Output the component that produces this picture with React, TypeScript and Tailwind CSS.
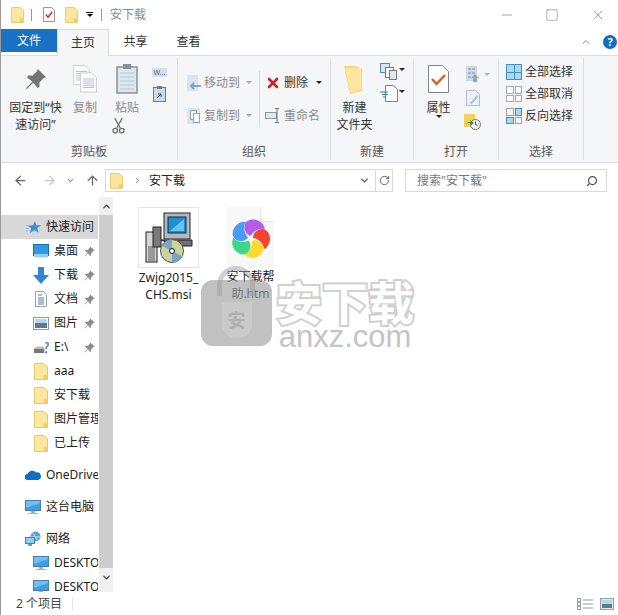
import { ReactNode } from "react";
import { ArrowLeft, ArrowRight, ArrowUp, ChevronDown, ChevronRight, ChevronUp, Minus, RotateCw, Search, Square, X } from "lucide-react";

const FONT = "font-['Noto_Sans','Noto_Sans_CJK_SC',sans-serif]";

function Folder({ className = "w-[14px] h-[17px]" }: { className?: string }) {
  return (
    <svg viewBox="0 0 14 17" className={className}>
      <path d="M.5.5h9l4 3v13H.5z" fill="#fde79f" stroke="#e8c868" />
      <path d="M9.5 16.5V12h4v4.500z" fill="#f3cf6c" />
    </svg>
  );
}

function Pin({ className = "w-[11px] h-[11px]", color = "#8c8c8c" }: { className?: string; color?: string }) {
  return (
    <svg viewBox="0 0 24 24" className={className}>
      <path d="M14 1l9 9-2.500 1-5 5 .5 4-2 2-5-6-7 7-1-1 7-7-6-5 2-2 4 .5 5-5z" fill={color} />
    </svg>
  );
}

function Caret({ color = "#222" }: { color?: string }) {
  return <span className="inline-block border-x-[3px] border-t-[3px] border-x-transparent" style={{ borderTopColor: color }} />;
}

function DocLines({ className = "" }: { className?: string }) {
  return (
    <svg viewBox="0 0 24 28" className={className}>
      <path d="M.5.5h16l7 7v20H.5z" fill="#fff" stroke="#b4b8bd" />
      <path d="M4 9h16M4 12h16M4 15h16M4 18h16M4 21h16" stroke="#8fa7c4" />
    </svg>
  );
}

function Monitor() {
  return (
    <svg viewBox="0 0 16 15" className="w-[16px] h-[15px]">
      <rect x=".5" y=".5" width="15" height="10" fill="#6cc0f5" stroke="#4a7fa8" />
      <path d="M1 8l14-5v7H1z" fill="#3fa0e8" />
      <path d="M6 11h4v2H6zM3 13h10v1H3z" fill="#9fb3c4" />
    </svg>
  );
}

function NavRow({ icon, label, pinned, top, active }: { icon: ReactNode; label: string; pinned?: boolean; top?: boolean; active?: boolean }) {
  return (
    <div className={`h-[24px] flex items-center shrink-0 whitespace-nowrap overflow-hidden relative ${top ? "pl-[24px]" : "pl-[32px]"} ${active ? "bg-[#d9d9d9]" : ""}`}>
      <span className="w-[16px] h-[16px] flex items-center justify-center shrink-0">{icon}</span>
      <span className="ml-[5px] text-[12px] text-[#222]">{label}</span>
      {pinned && (
        <span className="absolute left-[83px] top-[7px]">
          <Pin />
        </span>
      )}
    </div>
  );
}

function Sidebar() {
  return (
    <div className="w-[112px] flex shrink-0 h-[395px] overflow-hidden">
      <div className="w-[97px] pt-[18px] flex flex-col shrink-0 overflow-hidden">
        <NavRow
          top
          active
          label="快速访问"
          icon={
            <svg viewBox="0 0 16 16" className="w-[15px] h-[15px]">
              <path d="M9.500 1l1.500 4.500 5 .2-4 3 1.500 5L9 11l-5 3 1.600-5L2 6l5.500-.3z" fill="#3d8fd6" />
              <path d="M0 6h4M0 9h3M0 12h2" stroke="#8cc0ea" />
            </svg>
          }
        />
        <NavRow
          pinned
          label="桌面"
          icon={
            <svg viewBox="0 0 16 14" className="w-[16px] h-[14px]">
              <rect x=".5" y=".5" width="15" height="11" fill="#2f9ae8" stroke="#1b6fb0" />
              <path d="M1 10h14v3.500H1z" fill="#9fcdee" />
            </svg>
          }
        />
        <NavRow
          pinned
          label="下载"
          icon={
            <svg viewBox="0 0 16 17" className="w-[16px] h-[17px]">
              <path d="M5 0h6v8h5l-8 9-8-9h5z" fill="#2e86d8" />
            </svg>
          }
        />
        <NavRow
          pinned
          label="文档"
          icon={
            <svg viewBox="0 0 12 16" className="w-[12px] h-[16px]">
              <path d="M.5.500h8l3 3v12H.5z" fill="#fff" stroke="#9aa3ac" />
              <path d="M3 4h4M3 7h6M3 9h6M3 11h6M3 13h6" stroke="#4f7f9f" />
            </svg>
          }
        />
        <NavRow
          pinned
          label="图片"
          icon={
            <svg viewBox="0 0 16 13" className="w-[16px] h-[13px]">
              <rect x=".5" y=".5" width="15" height="12" fill="#fff" stroke="#8c98a4" />
              <path d="M2 2h12v4H2z" fill="#b5d6ee" />
              <path d="M2 6h12v5H2z" fill="#5e7b8c" />
            </svg>
          }
        />
        <NavRow
          pinned
          label="E:\"
          icon={
            <svg viewBox="0 0 16 14" className="w-[15px] h-[13px]">
              <rect x="0" y="8" width="11" height="5" fill="#777" />
              <path d="M0 8l3-2h7l1 2z" fill="#b9bec2" />
              <path d="M12 2h3v3l-2 2v2" fill="none" stroke="#3a7fc8" strokeWidth="1.500" />
              <rect x="12" y="11" width="2" height="2" fill="#3a7fc8" />
            </svg>
          }
        />
        <NavRow label="aaa" icon={<Folder />} />
        <NavRow label="安下载" icon={<Folder />} />
        <NavRow label="图片管理" icon={<Folder />} />
        <NavRow label="已上传" icon={<Folder />} />
        <div className="h-[8px] shrink-0" />
        <NavRow
          top
          label="OneDrive"
          icon={
            <svg viewBox="0 0 16 10" className="w-[16px] h-[10px]">
              <path d="M3 10a3 3 0 01-.5-6A5 5 0 0111 2.500 3.800 3.800 0 0113 10z" fill="#0f6cc4" />
            </svg>
          }
        />
        <div className="h-[8px] shrink-0" />
        <NavRow top label="这台电脑" icon={<Monitor />} />
        <div className="h-[8px] shrink-0" />
        <NavRow
          top
          label="网络"
          icon={
            <svg viewBox="0 0 16 16" className="w-[16px] h-[16px]">
              <circle cx="10.500" cy="5.500" r="5" fill="#5a9fd8" />
              <path d="M8 2l4 7M6 6h9" stroke="#cfe6f7" />
              <rect x=".5" y="6.500" width="9" height="6" fill="#8fd0f5" stroke="#4a7fa8" />
              <path d="M3 14h4" stroke="#7f98ac" strokeWidth="2" />
            </svg>
          }
        />
        <NavRow label="DESKTOP-1" icon={<Monitor />} />
        <NavRow label="DESKTOP-2" icon={<Monitor />} />
      </div>
      <div className="w-[15px] flex flex-col bg-[#f0f0f0] ml-px">
        <div className="h-[18px] flex items-center justify-center">
          <ChevronUp className="w-[11px] h-[11px] text-[#444]" strokeWidth={3} />
        </div>
        <div className="h-[353px] bg-[#cdcdcd]" />
        <div className="h-[24px] flex items-center justify-center pb-[6px]">
          <ChevronDown className="w-[11px] h-[11px] text-[#444]" strokeWidth={3} />
        </div>
      </div>
    </div>
  );
}

function Group({ label, width, children }: { label: string; width: string; children: ReactNode }) {
  return (
    <div className={`${width} h-[102px] mt-[2px] flex flex-col border-r border-[#dcdfe3] shrink-0`}>
      <div className="h-[85px] flex">{children}</div>
      <div className="text-center text-[12px] leading-[17px] text-[#555]">{label}</div>
    </div>
  );
}

function SmallRow({ icon, label, caret }: { icon: ReactNode; label: string; caret?: boolean }) {
  return (
    <div className="h-[33px] flex items-center gap-[3px] text-[12px] text-[#8b8b8b]">
      {icon}
      <span>{label}</span>
      {caret && (
        <span className="ml-[3px] flex">
          <Caret color="#aaa" />
        </span>
      )}
    </div>
  );
}

function SelectRow({ label, cells, dim }: { label: string; cells: string[]; dim?: boolean }) {
  return (
    <div className="h-[22px] flex items-center gap-[3px] text-[12px] text-[#333]">
      <span className={`w-[16px] h-[16px] grid grid-cols-2 gap-px ${dim ? "" : "bg-[#3a92c8] p-px"}`}>
        {cells.map((c, i) => (
          <span key={i} className={`${c} ${dim ? "border border-[#a8a8a8]" : ""}`} />
        ))}
      </span>
      <span>{label}</span>
    </div>
  );
}

function DocLinesPencil() {
  return (
    <svg viewBox="0 0 14 16" className="w-[14px] h-[16px]">
      <path d="M.5.500h9l4 4v11H.5z" fill="#eef2f7" stroke="#b0bccb" />
      <path d="M4 13l7-8 1.500 1.500-7 8z" fill="#aec4dd" />
    </svg>
  );
}

function Ribbon() {
  return (
    <div className="h-[108px] bg-[#f5f6f7] border-y border-[#dadbdc] flex">
      <Group label="剪贴板" width="w-[177px]">
        <div className="w-[65px] pl-[4px] flex flex-col items-center text-[12px] leading-[17px] text-[#333]">
          <div className="h-[41px] pt-[10px]">
            <Pin className="w-[22px] h-[22px]" color="#757575" />
          </div>
          <div className="text-center whitespace-nowrap">
            固定到“快
            <br />
            速访问”
          </div>
        </div>
        <div className="w-[38px] flex flex-col items-center text-[12px] leading-[17px] text-[#8b8b8b]">
          <div className="h-[41px] pt-[7px]">
            <span className="flex relative w-[24px] h-[28px]">
              <DocLines className="w-[17px] h-[20px]" />
              <span className="absolute left-[7px] top-[7px] flex">
                <DocLines className="w-[17px] h-[21px]" />
              </span>
            </span>
          </div>
          <span className="whitespace-nowrap">复制</span>
        </div>
        <div className="w-[46px] flex flex-col items-center text-[12px] leading-[17px] text-[#8b8b8b]">
          <div className="h-[41px] pt-[6px]">
            <svg viewBox="0 0 22 30" className="w-[22px] h-[30px]">
              <rect x="1" y="3" width="20" height="26" fill="#dfe6ef" stroke="#8a9099" strokeWidth="1.500" />
              <path d="M4 9h14M4 13h14M4 17h14M4 21h14M4 25h14" stroke="#b8c4d4" />
              <rect x="7" y="0" width="8" height="5" fill="#8a9099" />
            </svg>
          </div>
          <span className="whitespace-nowrap">粘贴</span>
          <svg viewBox="0 0 14 18" className="w-[13px] h-[17px] mt-[1px] -ml-[18px]" fill="none" stroke="#6f7275" strokeWidth="1.400">
            <path d="M3 1l6 11M11 1L5 12" />
            <circle cx="3.500" cy="14.500" r="2.500" />
            <circle cx="10.500" cy="14.500" r="2.500" />
          </svg>
        </div>
        <div className="flex flex-col items-center pt-[10px] pl-[2px] gap-[9px]">
          <span className="w-[15px] h-[9px] bg-[#d5deea] text-[7px] leading-[9px] text-[#47617f] text-center overflow-hidden">W...</span>
          <svg viewBox="0 0 13 16" className="w-[13px] h-[16px]">
            <rect x=".5" y="1.500" width="12" height="14" fill="#cfdbe8" stroke="#747b84" />
            <rect x="4" y="0" width="5" height="3" fill="#747b84" />
            <path d="M4 12l4-4M5 8h3v3" stroke="#3f4b58" fill="none" />
          </svg>
        </div>
      </Group>
      <Group label="组织" width="w-[153px]">
        <div className="pl-[9px] pt-[8px] w-[81px]">
          <SmallRow
            caret
            label="移动到"
            icon={
              <svg viewBox="0 0 14 16" className="w-[14px] h-[16px]">
                <rect width="11" height="16" fill="#dbe4ef" />
                <path d="M4 11h10M7 8l-3 3 3 3" stroke="#8ca3bf" strokeWidth="2" fill="none" />
              </svg>
            }
          />
          <SmallRow
            caret
            label="复制到"
            icon={
              <svg viewBox="0 0 14 16" className="w-[14px] h-[16px]">
                <rect width="13" height="16" fill="#dbe4ef" />
                <rect x="3.500" y="2.500" width="6" height="9" fill="#fff" stroke="#98a2ad" />
                <rect x="6.500" y="5.500" width="6" height="9" fill="#fff" stroke="#98a2ad" />
              </svg>
            }
          />
        </div>
        <div className="w-px h-[55px] bg-[#d5d8dc] mt-[13px]" />
        <div className="pl-[5px] pt-[8px]">
          <div className="h-[33px] flex items-center gap-[3px] text-[12px] text-[#333]">
            <X className="w-[16px] h-[16px] text-[#c8242b]" strokeWidth={4} />
            <span>删除</span>
            <span className="ml-[5px] flex">
              <Caret />
            </span>
          </div>
          <SmallRow
            label="重命名"
            icon={
              <svg viewBox="0 0 16 15" className="w-[16px] h-[15px]">
                <rect x=".5" y="4.500" width="11" height="6" fill="#dfe7f1" stroke="#8b97a5" />
                <path d="M12 1v13M10 .5h4M10 14.500h4" stroke="#6e7882" fill="none" />
              </svg>
            }
          />
        </div>
      </Group>
      <Group label="新建" width="w-[83px]">
        <div className="w-[47px] flex flex-col items-center text-[12px] leading-[17px] text-[#333]">
          <div className="h-[41px] pt-[8px] -ml-[2px]">
            <svg viewBox="0 0 19 28" className="w-[19px] h-[28px]">
              <path d="M0 0h12l6 3v22l-12 3z" fill="#f8d775" />
              <path d="M1 2h16v21L7 27z" fill="#fde7a0" />
            </svg>
          </div>
          <span className="whitespace-nowrap">新建</span>
          <span className="whitespace-nowrap">文件夹</span>
        </div>
        <div className="pt-[5px] pl-[2px] flex flex-col gap-[5px]">
          <span className="flex items-center gap-[1px]">
            <svg viewBox="0 0 18 17" className="w-[18px] h-[17px]">
              <rect x=".5" y=".5" width="9" height="9" fill="#d3e6f5" stroke="#5b87a8" />
              <rect x="5.500" y="4.500" width="8" height="10" fill="#fff" stroke="#777" />
              <rect x="9.500" y="7.500" width="7" height="9" fill="#e6e9ec" stroke="#777" />
            </svg>
            <span className="flex -mt-[4px]">
              <Caret />
            </span>
          </span>
          <span className="flex items-center gap-[1px]">
            <svg viewBox="0 0 18 17" className="w-[18px] h-[17px]">
              <path d="M5.500.5h8l4 4v12h-12z" fill="#fff" stroke="#7d848b" />
              <path d="M0 7h8M2 9.500h6M3 12h3" stroke="#2a7cc0" />
            </svg>
            <span className="flex -mt-[4px]">
              <Caret />
            </span>
          </span>
        </div>
      </Group>
      <Group label="打开" width="w-[85px]">
        <div className="w-[48px] pl-[1px] flex flex-col items-center text-[12px] leading-[17px] text-[#333]">
          <div className="h-[41px] pt-[7px]">
            <svg viewBox="0 0 21 28" className="w-[21px] h-[28px]">
              <path d="M.5.500h14l6 6v21H.5z" fill="#fff" stroke="#7d848b" />
              <path d="M4 14l4.500 5L17 10" fill="none" stroke="#d2652c" strokeWidth="2.500" />
            </svg>
          </div>
          <span className="whitespace-nowrap">属性</span>
          <span className="flex -mt-[1px]">
            <Caret />
          </span>
        </div>
        <div className="pt-[8px] pl-[4px] flex flex-col gap-[8px]">
          <span className="flex items-center gap-[3px]">
            <svg viewBox="0 0 15 16" className="w-[15px] h-[16px]">
              <rect width="11" height="15" fill="#cfd9e6" />
              <path d="M2 3h3M6 3h3M2 7h3M6 7h3M2 11h3" stroke="#7e8fa5" />
              <path d="M7 16v-4H5l4-4 4 4h-2v4z" fill="#8ba7c6" />
            </svg>
            <Caret color="#b5b5b5" />
          </span>
          <DocLinesPencil />
          <svg viewBox="0 0 17 16" className="w-[17px] h-[16px] -ml-[2px]">
            <rect width="11" height="13" fill="#f5d05a" />
            <circle cx="11.500" cy="10.500" r="5" fill="#eee" stroke="#777" />
            <path d="M11.500 7.500v3l2 1" stroke="#555" fill="none" />
            <path d="M2 11a4 4 0 015-3l-1-2 4 3-4 3 1-2a3 3 0 00-5 1z" fill="#2f9a3b" />
          </svg>
        </div>
      </Group>
      <Group label="选择" width="w-[85px]">
        <div className="pl-[7px] pt-[3px]">
          <SelectRow label="全部选择" cells={["bg-[#aed6f1]", "bg-[#aed6f1]", "bg-[#aed6f1]", "bg-[#aed6f1]"]} />
          <SelectRow dim label="全部取消" cells={["bg-white", "bg-white", "bg-white", "bg-white"]} />
          <div className="h-[22px] flex items-center gap-[3px] text-[12px] text-[#333]">
            <span className="w-[16px] h-[16px] grid grid-cols-2 gap-px">
              <span className="border border-[#a0a0a0]" />
              <span className="bg-[#aed6f1] border border-[#3a92c8]" />
              <span className="bg-[#aed6f1] border border-[#3a92c8]" />
              <span className="border border-[#a0a0a0]" />
            </span>
            <span>反向选择</span>
          </div>
        </div>
      </Group>
    </div>
  );
}

function MsiIcon() {
  return (
    <div className="w-[61px] h-[61px] border border-[#e5e5e5] flex items-center justify-center">
      <svg viewBox="0 0 48 52" className="w-[48px] h-[52px]">
        <rect x="1" y="20" width="11" height="30" fill="#d4d4d4" stroke="#222" />
        <rect x="3" y="34" width="7" height="15" fill="#9a9a9a" />
        <rect x="8" y="15" width="8" height="20" fill="#7a7a7a" stroke="#222" />
        <rect x="19" y="1" width="26" height="26" fill="#b5b8bf" stroke="#222" />
        <rect x="23" y="5" width="18" height="16" fill="#1e8fd0" stroke="#133" />
        <path d="M25 19l14-12v12z" fill="#67c4ec" />
        <path d="M16 28h31v6H30z" fill="#6c6f76" stroke="#222" />
        <circle cx="27" cy="39" r="11.500" fill="#c9d39c" stroke="#555" />
        <path d="M27 39L17 34a11.500 11.500 0 0110-6.500zM27 39l10 5a11.500 11.500 0 01-10 6.500z" fill="#7ba6c9" />
        <circle cx="27" cy="39" r="2.500" fill="#fff" stroke="#111" />
      </svg>
    </div>
  );
}

function HtmIcon() {
  const petals = ["#f4452c", "#ffd92e", "#3ed68a", "#4a9df5", "#b45ce8"];
  return (
    <div className="w-[47px] h-[60px] relative bg-[#f8f8f8]">
      <span className="absolute right-0 top-0 w-[14px] h-[15px] bg-white border-l border-b border-[#e3e3e3]" />
      <svg viewBox="-19 -19 38 38" className="absolute left-[4px] top-[12px] w-[39px] h-[39px]">
        {petals.map((c, i) => (
          <path key={c} d="M0-2.500C-6-5-8-13-3-17 3-21 13-17 14-9 9-11 4-8 0-2.500z" fill={c} transform={`rotate(${(i + 1) * 72})`} />
        ))}
        <circle r="2.500" fill="#fff" />
      </svg>
    </div>
  );
}

function FileItem({ icon, lines }: { icon: ReactNode; lines: string[] }) {
  return (
    <div className="w-[73px] flex flex-col items-center text-[12px] leading-[17px] text-[#222]">
      {icon}
      <div className="mt-[1px] text-center">
        {lines.map((l) => (
          <div key={l} className="whitespace-nowrap">
            {l}
          </div>
        ))}
      </div>
    </div>
  );
}

export default function App() {
  return (
    <div className={`${FONT} relative w-[618px] h-[615px] bg-white overflow-hidden border-l border-[#9a9a9a]`}>
      {/* title bar */}
      <div className="h-[29px] flex items-center">
        <span className="ml-[10px] flex">
          <Folder className="w-[13px] h-[16px]" />
        </span>
        <span className="ml-[7px] w-px h-[12px] bg-[#999]" />
        <span className="ml-[11px] flex">
          <svg viewBox="0 0 13 16" className="w-[12px] h-[15px]">
            <path d="M.5.500h9l3 3v12H.5z" fill="#fff" stroke="#8a8a8a" />
            <path d="M3 8l2.500 3L10 5" fill="none" stroke="#c9352b" strokeWidth="1.500" />
          </svg>
        </span>
        <span className="ml-[10px] flex">
          <Folder className="w-[13px] h-[16px]" />
        </span>
        <span className="ml-[8px] flex flex-col items-center">
          <span className="w-[7px] h-px bg-black mb-px" />
          <Caret color="#000" />
        </span>
        <span className="ml-[8px] w-px h-[12px] bg-[#999]" />
        <span className="ml-[8px] text-[12px] text-[#8c8c8c]">安下载</span>
        <span className="ml-auto flex items-center text-[#777] pr-[12px]">
          <Minus className="w-[16px] h-[16px]" strokeWidth={1} />
          <Square className="w-[14px] h-[14px] ml-[30px]" strokeWidth={1} />
          <X className="w-[16px] h-[16px] ml-[31px]" strokeWidth={1} />
        </span>
      </div>
      {/* tabs */}
      <div className="h-[26px] flex items-stretch text-[12px] text-[#333]">
        <div className="w-[56px] h-[23px] bg-[#1a72c4] text-white flex items-center justify-center pt-[1px]">文件</div>
        <div className="w-[52px] h-[27px] bg-[#f5f6f7] border border-b-0 border-[#dadbdc] flex items-center justify-center relative z-10">主页</div>
        <div className="w-[53px] flex items-center justify-center">共享</div>
        <div className="w-[53px] flex items-center justify-center">查看</div>
        <div className="ml-auto flex items-center">
          <ChevronUp className="w-[12px] h-[12px] text-[#888]" />
          <span className="ml-[11px] mr-[1px] w-[14px] h-[14px] rounded-full bg-[#0f6fc6] text-white text-[11px] font-bold leading-[14px] text-center">?</span>
        </div>
      </div>
      <Ribbon />
      {/* address bar */}
      <div className="h-[34px] flex items-center pt-[1px] text-[#777]">
        <span className="ml-[12px] flex">
          <ArrowLeft className="w-[15px] h-[15px] text-[#666]" />
        </span>
        <span className="ml-[14px] flex">
          <ArrowRight className="w-[15px] h-[15px] text-[#c8c8c8]" />
        </span>
        <span className="ml-[9px] flex">
          <ChevronDown className="w-[9px] h-[9px] text-[#999]" strokeWidth={3} />
        </span>
        <span className="ml-[10px] flex">
          <ArrowUp className="w-[15px] h-[15px] text-[#666]" />
        </span>
        <div className="ml-[5px] w-[288px] h-[23px] border border-[#d9d9d9] flex items-center">
          <span className="ml-[4px] flex">
            <Folder className="w-[13px] h-[16px]" />
          </span>
          <ChevronRight className="ml-[10px] w-[9px] h-[9px] text-[#777]" strokeWidth={2.500} />
          <span className="ml-[7px] text-[12px] text-[#222]">安下载</span>
          <ChevronDown className="ml-auto mr-[5px] w-[11px] h-[11px] text-[#555]" strokeWidth={3} />
          <span className="w-[17px] h-full border-l border-[#d9d9d9] flex items-center justify-center">
            <RotateCw className="w-[11px] h-[11px] text-[#555]" />
          </span>
        </div>
        <div className="ml-[12px] w-[202px] h-[23px] border border-[#d9d9d9] flex items-center pl-[11px] text-[12px] text-[#777]">
          搜索"安下载"
          <Search className="ml-auto mr-[8px] w-[12px] h-[12px] -scale-x-100 text-[#555]" strokeWidth={2.500} />
        </div>
      </div>
      {/* main */}
      <div className="flex">
        <Sidebar />
        <div className="flex pt-[10px] pl-[19px] gap-[9px] items-start">
          <FileItem icon={<MsiIcon />} lines={["Zwjg2015_", "CHS.msi"]} />
          <FileItem icon={<HtmIcon />} lines={["安下载帮", "助.htm"]} />
        </div>
      </div>
      {/* status bar */}
      <div className="h-[23px] flex items-center text-[12px] text-[#444]">
        <span className="ml-[15px]">2 个项目</span>
        <span className="ml-[10px] w-px h-[14px] bg-[#e5e5e5]" />
        <span className="ml-auto mr-[4px] flex items-center gap-[7px]">
          <svg viewBox="0 0 16 12" className="w-[16px] h-[12px]" fill="none" stroke="#8f9aa5">
            <path d="M.5.500h3v3h-3zM.5 4.500h3v3h-3zM.5 8.500h3v3h-3zM6 2h10M6 6h10M6 10h10" />
          </svg>
          <svg viewBox="0 0 14 12" className="w-[14px] h-[12px]">
            <rect x=".5" y=".5" width="13" height="11" fill="#fff" stroke="#8fa3b3" strokeWidth="1.500" />
            <path d="M2 2h10v4H2z" fill="#b5d6ee" />
            <path d="M2 6h10v4H2z" fill="#5e7b8c" />
          </svg>
        </span>
      </div>
      {/* watermark */}
      <div className="absolute left-[200px] top-[266px] w-[71px] h-[80px] pointer-events-none">
        <div className="absolute left-[16px] top-0 w-[38px] h-[30px] rounded-t-full border-[5px] border-b-0 border-[#a0a0a0]/50" />
        <div className="absolute left-0 top-[14px] w-[71px] h-[66px] rounded-[12px] bg-[#a0a0a0]/65 flex items-end justify-center pb-[8px]">
          <span className="w-[30px] h-[36px] rounded-b-[14px] bg-[#d0d0d0]/60 text-[#b0b0b0] text-[18px] font-bold flex items-center justify-center">安</span>
        </div>
      </div>
      <div className="absolute left-[275px] top-[277px] pointer-events-none flex flex-col items-center">
        <span className="text-[46px] leading-[50px] font-bold text-white [-webkit-text-stroke:4px_#d0d0d0] [paint-order:stroke_fill]">安下载</span>
        <span className="text-[31px] leading-[20px] text-[#c4c4c4] font-['Liberation_Sans',sans-serif]">anxz.com</span>
      </div>
    </div>
  );
}
